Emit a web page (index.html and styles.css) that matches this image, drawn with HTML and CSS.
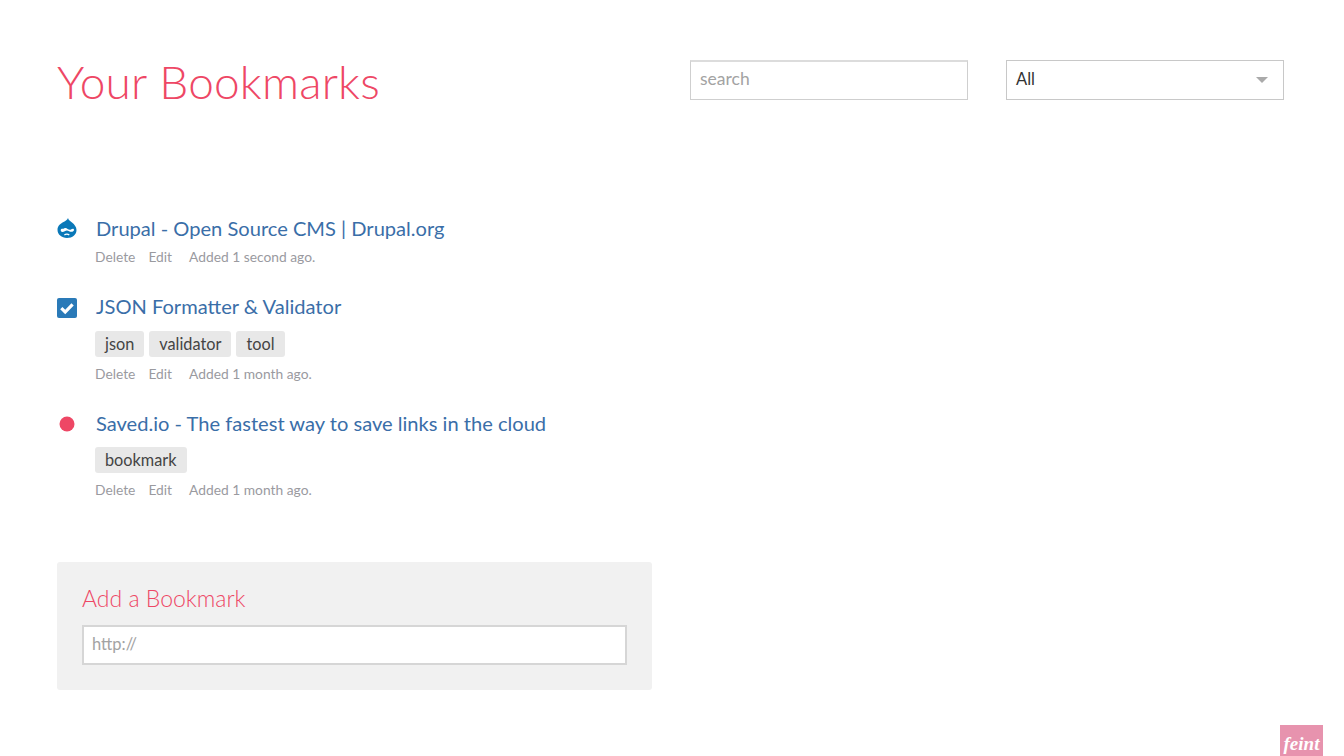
FILE: index.html
```html
<!DOCTYPE html>
<html lang="en">
<head>
<meta charset="utf-8">
<title>Your Bookmarks</title>
<link rel="stylesheet" href="styles.css">
</head>
<body>
<div class="page">
  <header class="top">
    <h1 class="title">Your Bookmarks</h1>
    <div class="field search">search</div>
    <div class="field select"><span>All</span><i class="caret"></i></div>
  </header>
  <ul class="list">
    <li class="item">
      <div class="head">
        <svg class="fav" viewBox="0 0 20 20"><path fill="#0a78b8" d="M11 0c.4 2.200 2.400 3.200 4 4.500C17.500 6.500 19.500 9 19.500 12 19.500 16.500 15.500 20 10 20S.5 16.500.5 11.800C.5 7.500 4 5.500 6.500 4 8.500 2.800 10.500 2 11 0z"/><path fill="#fff" d="M8.500 10c1.500 0 2.700 1.800 4.300 1.800 1.100 0 1.900-1.100 3-1.100.8 0 1.200.6 1.200 1.200 0 1.100-1.400 1.900-2.500 1.900-2 0-3-1.400-4.600-1.400-1.500 0-2.800 1.500-4.400 1.500-1.100 0-1.800-.8-1.800-1.700 0-1 .9-1.400 1.800-1.400 1.300 0 1.800-.8 3-.8z"/><path fill="#fff" d="M7 16.500c1.600-1.300 4.200-1.300 5.700 0l-.8.900c-1.200-.8-3-.8-4.200 0z"/></svg>
        <a class="link">Drupal - Open Source CMS | Drupal.org</a>
      </div>
      <div class="meta"><span>Delete</span><span>Edit</span><span class="when">Added 1 second ago.</span></div>
    </li>
    <li class="item">
      <div class="head">
        <svg class="fav fav-low" viewBox="0 0 20 20"><rect width="20" height="20" rx="2" fill="#2a7ab8"/><path d="M4.300 10.200l3.900 3.800 7.400-7.700" fill="none" stroke="#fff" stroke-width="3.200"/></svg>
        <a class="link">JSON Formatter &amp; Validator</a>
      </div>
      <div class="tags"><span class="tag">json</span><span class="tag">validator</span><span class="tag">tool</span></div>
      <div class="meta"><span>Delete</span><span>Edit</span><span class="when">Added 1 month ago.</span></div>
    </li>
    <li class="item">
      <div class="head">
        <svg class="fav fav-dot" viewBox="0 0 20 20"><circle cx="10" cy="10" r="7.500" fill="#ee4765"/></svg>
        <a class="link">Saved.io - The fastest way to save links in the cloud</a>
      </div>
      <div class="tags tags-tight"><span class="tag">bookmark</span></div>
      <div class="meta"><span>Delete</span><span>Edit</span><span class="when">Added 1 month ago.</span></div>
    </li>
  </ul>
  <section class="panel">
    <h2 class="panel-title">Add a Bookmark</h2>
    <div class="field url">http://</div>
  </section>
</div>
<div class="badge">feint</div>
</body>
</html>
```

FILE: styles.css
```css
* { box-sizing: border-box; }
html, body { margin: 0; height: 756px; overflow: hidden; background: #fff; }
body { font-family: Lato, "Open Sans", sans-serif; position: relative; }
.page { padding: 60px 60px 0 57px; }
.top { display: grid; grid-template-columns: 595px 278px 278px; grid-template-rows: 40px; column-gap: 38px; align-items: center; }
.title { margin: 0; font-size: 46px; font-weight: 300; color: #ee4765; line-height: 48px; letter-spacing: .2px; position: relative; top: 2px; }
.field { height: 40px; display: flex; align-items: center; font-size: 16px; background: #fff; padding: 0 8px 3px; }
.search { border: 1px solid #cfcfcf; border-top: 2px solid #dcdcdc; padding: 0 9px 5px; font-size: 17.500px; color: #a3a3a3; }
.url { width: 545px; border: 2px solid #d6d6d6; font-size: 16.500px; color: #a3a3a3; }
.select { border: 1px solid #c8c8c8; padding: 0 15px 3px 9px; color: #333; font-size: 16.500px; justify-content: space-between; }
.caret { width: 0; height: 0; border-left: 6px solid transparent; border-right: 6px solid transparent; border-top: 6px solid #aaa; margin-top: 2px; }
.list { list-style: none; margin: 115px 0 0; padding: 0; }
.item { margin-bottom: 25px; height: 53px; }
.item:nth-child(n+2) { height: 92px; }
.head { display: flex; align-items: center; height: 26px; }
.fav { width: 20px; height: 20px; margin-right: 19px; flex: none; }
.fav-low { margin-top: 4px; }
.fav-dot { margin-top: 2px; }
.link { color: #3a6ea8; font-size: 20.100px; line-height: 26px; }
.tags { display: flex; gap: 5px; margin: 12px 0 0 38px; height: 26px; }
.tags-tight { margin-top: 11px; }
.tag { background: #e8e8e8; color: #444; border-radius: 3px; padding: 0 10px; font-size: 16.300px; line-height: 26px; }
.meta { display: flex; margin: 7px 0 0 38px; font-size: 13.800px; line-height: 18px; color: #9a9a9f; gap: 13px; }
.tags + .meta { margin-top: 8px; }
.when { margin-left: 4px; }
.panel { width: 595px; height: 128px; margin-top: 60px; background: #f1f1f1; border-radius: 3px; padding: 21px 25px; }
.panel-title { margin: 0 0 11px; font-size: 23px; font-weight: 300; line-height: 31px; color: #ee4765; }
.badge { position: absolute; left: 1280px; top: 725px; width: 43px; height: 31px; background: #e793ae; color: #fff; font: italic 700 19px "Liberation Serif", serif; text-align: center; line-height: 38px; overflow: hidden; }
```
